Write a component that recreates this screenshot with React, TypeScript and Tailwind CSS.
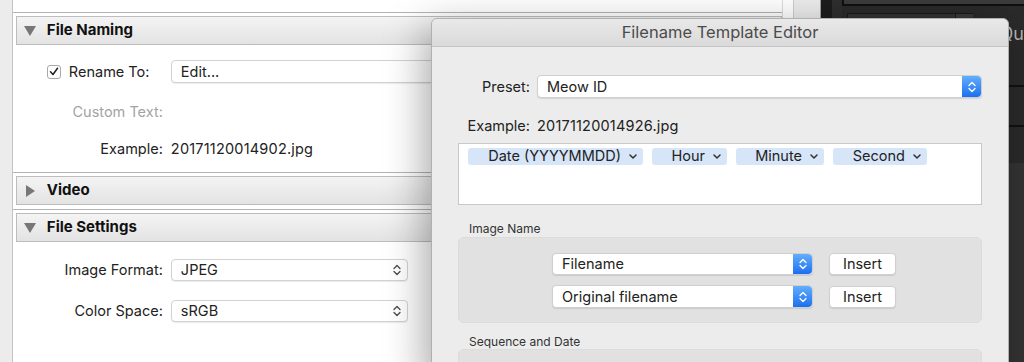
import React from "react";

function Chevrons({ stroke = "#4a4a4a" }: { stroke?: string }) {
  return (
    <svg width="8" height="12" viewBox="0 0 8 12" fill="none">
      <path d="M1 4.5 L4 1.5 L7 4.5" stroke={stroke} strokeWidth="1.3" strokeLinecap="round" strokeLinejoin="round" />
      <path d="M1 7.5 L4 10.5 L7 7.5" stroke={stroke} strokeWidth="1.3" strokeLinecap="round" strokeLinejoin="round" />
    </svg>
  );
}

function Triangle({ open }: { open?: boolean }) {
  if (open) {
    return (
      <svg width="12" height="10" viewBox="0 0 12 10">
        <path d="M0 0 H12 L6 10 Z" fill="#777" />
      </svg>
    );
  }
  return (
    <svg width="12" height="12" viewBox="0 0 12 12">
      <path d="M2 0 L11 6 L2 12 Z" fill="#777" />
    </svg>
  );
}

function SectionHeader({ title, open }: { title: string; open?: boolean }) {
  return (
    <div className="border-t border-[#b3b3b3] pl-[3px] pt-[3px]">
      <div className="flex h-[29px] items-center border border-[#bdbdbd] bg-gradient-to-b from-[#f4f4f4] to-[#e3e3e3] pl-[7px]">
        <div className="flex w-[12px] justify-center">
          <Triangle open={open} />
        </div>
        <span className="ml-[11px] text-[15px] font-bold text-[#111]">{title}</span>
      </div>
    </div>
  );
}

function GraySelect({ value }: { value: string }) {
  return (
    <div className="flex h-[22px] w-[237px] items-center justify-between rounded-[4px] border border-[#d2d2d2] bg-white pl-[9px] pr-[6px] shadow-[0_1px_1px_rgba(0,0,0,0.08)]">
      <span>{value}</span>
      <Chevrons />
    </div>
  );
}

function BluePopup({ value, className }: { value: string; className: string }) {
  return (
    <div className={"flex items-stretch rounded-[4px] border border-[#cfcfcf] bg-white shadow-[0_1px_1px_rgba(0,0,0,0.1)] " + className}>
      <div className="flex flex-1 items-center pl-[9px]">{value}</div>
      <div className="flex w-[19px] items-center justify-center rounded-r-[4px] bg-gradient-to-b from-[#63adfb] to-[#1a6ff0]">
        <Chevrons stroke="#ffffff" />
      </div>
    </div>
  );
}

function Token({ label, w }: { label: string; w: string }) {
  return (
    <div className={"flex h-[17px] items-center justify-end rounded-[3px] bg-[#d6e5f8] pr-[6px] " + w}>
      <span className="leading-none">{label}</span>
      <svg className="ml-[8px]" width="8" height="5" viewBox="0 0 8 5" fill="none">
        <path d="M1 1 L4 4 L7 1" stroke="#333" strokeWidth="1.5" strokeLinecap="round" strokeLinejoin="round" />
      </svg>
    </div>
  );
}

function InsertButton() {
  return (
    <div className="ml-[16px] flex h-[22px] w-[67px] items-center justify-center rounded-[4px] border border-[#cfcfcf] bg-white shadow-[0_1px_1px_rgba(0,0,0,0.1)]">
      Insert
    </div>
  );
}

export default function App() {
  return (
    <div className="relative flex h-[362px] w-[1024px] overflow-hidden bg-[#ececec] font-['Inter','Liberation_Sans',sans-serif] text-[14.5px] text-[#222]">
      {/* left strip */}
      <div className="w-[13px] border-r border-[#c4c4c4] bg-[#ececec]" />

      {/* export settings panel */}
      <div className="flex w-[790px] border-r border-[#cdcdcd] bg-white">
        <div className="w-[769px]">
          <div className="h-[12px]" />
          <SectionHeader open title="File Naming" />
          <div className="h-[127px] pt-[15px]">
            <div className="flex h-[23px] items-center">
              <div className="flex w-[158px] items-center pl-[34px]">
                <div className="flex h-[14px] w-[14px] items-center justify-center rounded-[3px] border border-[#a9a9a9] bg-white">
                  <svg width="10" height="9" viewBox="0 0 10 9" fill="none">
                    <path d="M1.5 4.8 L4 7.5 L8.5 1.2" stroke="#222" strokeWidth="1.5" strokeLinecap="round" strokeLinejoin="round" />
                  </svg>
                </div>
                <span className="ml-[8px]">Rename To:</span>
              </div>
              <div className="flex h-[23px] w-[480px] items-center rounded-[4px] border border-[#d2d2d2] bg-white pl-[9px] shadow-[0_1px_1px_rgba(0,0,0,0.08)]">
                Edit...
              </div>
            </div>
            <div className="mt-[17px] flex h-[23px] items-center">
              <div className="w-[150px] text-right text-[#a3a3a3]">Custom Text:</div>
            </div>
            <div className="mt-[14px] flex h-[23px] items-center">
              <div className="w-[150px] text-right">Example:</div>
              <div className="ml-[8px] tracking-[0.2px]">20171120014902.jpg</div>
            </div>
          </div>
          <SectionHeader title="Video" />
          <div className="h-[4px]" />
          <SectionHeader open title="File Settings" />
          <div className="pt-[17px]">
            <div className="flex h-[22px] items-center">
              <div className="w-[150px] text-right">Image Format:</div>
              <div className="ml-[8px]">
                <GraySelect value="JPEG" />
              </div>
            </div>
            <div className="mt-[19px] flex h-[22px] items-center">
              <div className="w-[150px] text-right">Color Space:</div>
              <div className="ml-[8px]">
                <GraySelect value="sRGB" />
              </div>
            </div>
          </div>
        </div>
        <div className="flex-1 border-l border-[#dcdcdc]" />
      </div>

      {/* light gutter */}
      <div className="w-[27px] border-r border-[#a0a0a0] bg-[#ececec]" />

      {/* dark app area */}
      <div className="flex flex-1 bg-[#2a2a2a]">
        <div className="w-[11px] bg-[#1c1c1c]" />
        <div className="w-[10px] bg-[#2e2e2e]" />
        <div className="flex flex-1 flex-col">
          <div className="h-[6px] border-b-2 border-l-2 border-[#101010] bg-[#3c3c3c]" />
          <div className="mt-[7px] flex h-[8px] pl-[5px]">
            <div className="w-[108px] border-l border-t border-[#1a1a1a] bg-[#333]" />
            <div className="w-[18px] border-l border-t border-[#1a1a1a] bg-[#3a3a3a]" />
          </div>
          <div className="mt-[4px] pl-[158px] text-[18px] leading-[18px] text-[#b8b8b8]">Qu</div>
          <div className="mt-[42px] h-[2px] bg-[#111]" />
          <div className="mt-[38px] h-[2px] bg-[#111]" />
          <div className="mt-[36px] flex-1 bg-[#343434]" />
        </div>
      </div>

      {/* Filename Template Editor dialog */}
      <div className="absolute left-[431px] top-[18px] h-[360px] w-[578px] rounded-t-[6px] border border-[#b0b0b0] bg-[#ececec] shadow-[-6px_10px_40px_rgba(0,0,0,0.35)]">
        <div className="flex h-[28px] items-center justify-center rounded-t-[6px] border-b border-[#c5c5c5] bg-gradient-to-b from-[#e9e9e9] to-[#dadada] text-[16.5px] text-[#4b4b4b]">
          Filename Template Editor
        </div>
        <div className="px-[26px] pt-[28px]">
          <div className="flex h-[23px] items-center">
            <div className="w-[72px] text-right">Preset:</div>
            <BluePopup value="Meow ID" className="ml-[7px] h-[23px] flex-1" />
          </div>
          <div className="mt-[18px] flex h-[20px] items-center">
            <div className="w-[72px] text-right">Example:</div>
            <div className="ml-[7px] tracking-[0.2px]">20171120014926.jpg</div>
          </div>
          <div className="mt-[7px] h-[62px] border border-[#c8c8c8] bg-white pl-[9px] pt-[4px]">
            <div className="flex gap-[9px]">
              <Token label="Date (YYYYMMDD)" w="w-[175px]" />
              <Token label="Hour" w="w-[75px]" />
              <Token label="Minute" w="w-[88px]" />
              <Token label="Second" w="w-[94px]" />
            </div>
          </div>
          <div className="mt-[17px] pl-[11px] text-[12px] leading-[14px] text-[#333]">Image Name</div>
          <div className="mt-[1px] h-[86px] rounded-[6px] border border-[#dcdcdc] bg-[#e1e1e1] pl-[93px] pt-[15px]">
            <div className="flex items-center">
              <BluePopup value="Filename" className="h-[22px] w-[261px]" />
              <InsertButton />
            </div>
            <div className="mt-[10px] flex items-center">
              <BluePopup value="Original filename" className="h-[23px] w-[261px]" />
              <InsertButton />
            </div>
          </div>
          <div className="mt-[12px] pl-[11px] text-[12px] leading-[14px] text-[#333]">Sequence and Date</div>
          <div className="mt-[0px] h-[60px] rounded-[6px] border border-[#dcdcdc] bg-[#e1e1e1]" />
        </div>
      </div>
    </div>
  );
}
